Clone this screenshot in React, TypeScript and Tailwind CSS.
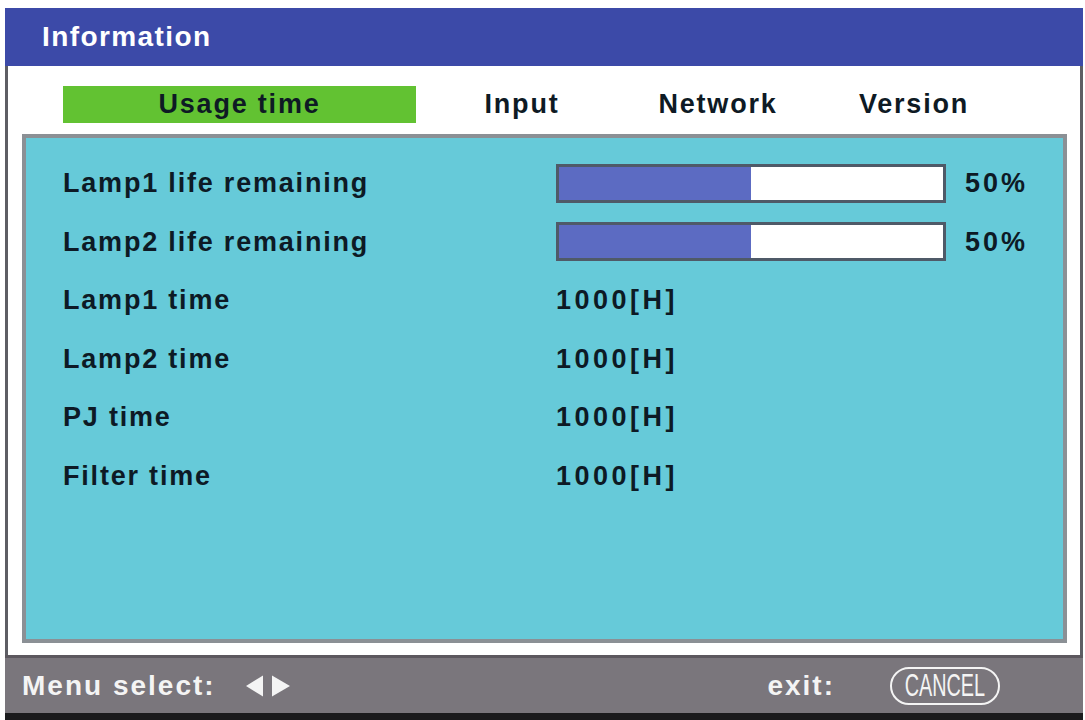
import React from 'react'

const rows: { label: string; value?: string; percent?: number }[] = [
  { label: 'Lamp1 life remaining', percent: 50 },
  { label: 'Lamp2 life remaining', percent: 50 },
  { label: 'Lamp1 time', value: '1000[H]' },
  { label: 'Lamp2 time', value: '1000[H]' },
  { label: 'PJ time', value: '1000[H]' },
  { label: 'Filter time', value: '1000[H]' },
]

const tabs = ['Input', 'Network', 'Version']

function LifeBar({ percent }: { percent: number }) {
  return (
    <div className="flex items-center">
      <div className="w-[390px] h-[39px] border-[3px] border-[#4f5a68] bg-white flex">
        <div className="h-full bg-[#5c6bc2]" style={{ width: `${percent}%` }} />
      </div>
      <span className="ml-[19px] tracking-[3px]">{percent}%</span>
    </div>
  )
}

function SelectArrows() {
  return (
    <svg width="46" height="24" viewBox="0 0 46 24" className="ml-[29px]">
      <path d="M1 12 L18 1.5 L18 22.5 Z" fill="#f4f4f4" />
      <path d="M27 1.5 L45 12 L27 22.5 Z" fill="#f4f4f4" />
    </svg>
  )
}

export default function App() {
  return (
    <div className="w-[1085px] h-[720px] bg-white pt-[8px] px-[2px] flex flex-col font-['Liberation_Sans',Arial,sans-serif] font-bold tracking-[1.8px]">
      <div className="flex-1 flex flex-col ml-[3px]">
        {/* Title */}
        <div className="h-[58px] bg-[#3c4aa8] flex items-center pl-[37px] text-white text-[28px] tracking-[1.4px]">
          Information
        </div>

        {/* Body */}
        <div className="flex-1 flex flex-col bg-white border-x-[3px] border-[#5e5e64] pt-[20px] pl-[14px] pr-[13px] pb-[12px]">
          {/* Tabs */}
          <div className="flex h-[37px] text-[27px] text-[#0e1a24]">
            <div className="ml-[41px] w-[353px] bg-[#62c232] flex items-center justify-center">
              Usage time
            </div>
            <div className="ml-[8px] flex">
              {tabs.map((t) => (
                <div key={t} className="w-[196px] flex items-center justify-center">
                  {t}
                </div>
              ))}
            </div>
          </div>

          {/* Panel */}
          <div className="mt-[11px] flex-1 border-[4px] border-[#8b9095] bg-[#66cad9] pt-[16px] pl-[37px] text-[27px] text-[#0d1a25]">
            {rows.map((r) => (
              <div key={r.label} className="h-[58.6px] flex items-center">
                <div className="w-[493px]">{r.label}</div>
                {r.percent !== undefined ? (
                  <LifeBar percent={r.percent} />
                ) : (
                  <div className="tracking-[3.5px]">{r.value}</div>
                )}
              </div>
            ))}
          </div>
        </div>

        {/* Footer */}
        <div className="h-[58px] bg-[#7a767c] border-t-[3px] border-[#5c585e] flex items-center text-[#f4f4f4] text-[28px] pl-[17px] pr-[83px] tracking-[2px]">
          <span>Menu select:</span>
          <SelectArrows />
          <span className="ml-auto">exit:</span>
          <div className="ml-[55px] w-[110px] h-[38px] rounded-full border-[2.5px] border-[#f4f4f4] flex items-center justify-center overflow-hidden">
            <span className="inline-block scale-x-[0.64] font-normal tracking-normal text-[31px] leading-none">CANCEL</span>
          </div>
        </div>
        <div className="h-[7px] bg-[#1b1b1d]" />
      </div>
    </div>
  )
}
